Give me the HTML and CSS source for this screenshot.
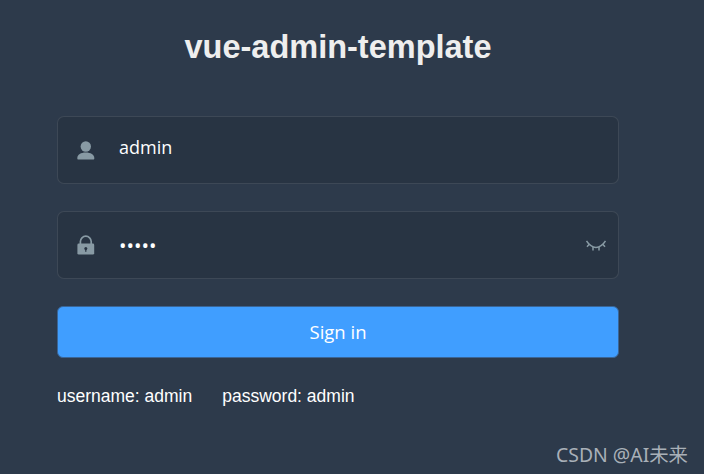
FILE: index.html
```html
<!DOCTYPE html>
<html lang="en">

<head>
    <meta charset="UTF-8">
    <meta name="viewport" content="width=device-width, initial-scale=1.0">
    <title>vue-admin-template</title>
    <link rel="stylesheet" href="styles.css">
</head>

<body>
    <div class="login-container">
        <form class="login-form">
            <h3 class="title">vue-admin-template</h3>

            <div class="form-item">
                <span class="svg-container">
                    <svg class="icon" width="20" height="20" viewBox="0 0 20 20">
                        <circle cx="9.800" cy="6.500" r="5.200" fill="#889aa4" />
                        <path d="M1.300 18.200c0-3.500 3.600-5.600 8.500-5.600s8.500 2.100 8.500 5.600c0 1-.4 1.400-1 1.400H2.300c-.6 0-1-.4-1-1.400z" fill="#889aa4" />
                    </svg>
                </span>
                <input class="form-input form-input-text" type="text" value="admin">
            </div>

            <div class="form-item">
                <span class="svg-container">
                    <svg class="icon" width="20" height="20" viewBox="0 0 20 20">
                        <path d="M4.400 9V6.600a5.400 5.400 0 0 1 10.800 0V9" fill="none" stroke="#889aa4" stroke-width="1.700" />
                        <rect x="1.400" y="8.600" width="16.800" height="11" rx="1.400" fill="#889aa4" />
                        <circle cx="9.800" cy="13.400" r="1.500" fill="#283443" />
                        <rect x="9.200" y="13.600" width="1.200" height="3.200" fill="#283443" />
                    </svg>
                </span>
                <input class="form-input form-input-pwd" type="password" value="admin">
                <span class="show-pwd">
                    <svg width="20" height="14" viewBox="0 0 20 14">
                        <path d="M.5 3c2.800 4.400 5.800 6.500 9.500 6.500s6.700-2.100 9.500-6.500" fill="none" stroke="#889aa4" stroke-width="1.500" />
                        <path d="M7 9v3.500M13 9v3.500M3.300 6.200L1 8.800M16.700 6.200L19 8.800" fill="none" stroke="#889aa4" stroke-width="1.500" />
                    </svg>
                </span>
            </div>

            <button class="btn-login" type="button">Sign in</button>

            <div class="tips">
                <span>username: admin</span>
                <span>password: admin</span>
            </div>
        </form>
    </div>

    <div class="watermark">CSDN @AI未来</div>
</body>

</html>
```

FILE: styles.css
```css
body {
    margin: 0;
    padding: 0;
    background-color: #2d3a4b;
    font-family: "Liberation Sans", Arial, sans-serif;
    overflow: hidden;
}

.login-container {
    min-height: 474px;
    width: 100%;
    box-sizing: border-box;
    padding: 0 85px 0 57px;
}

.login-form {
    width: 562px;
}

.title {
    margin: 0;
    padding-top: 26px;
    height: 90px;
    line-height: 42px;
    font-size: 32.5px;
    font-weight: bold;
    color: #eee;
    text-align: center;
    box-sizing: content-box;
}

.form-item {
    display: flex;
    align-items: center;
    height: 68px;
    margin-bottom: 27px;
    box-sizing: border-box;
    background-color: #283443;
    border: 1px solid rgba(255, 255, 255, 0.1);
    border-radius: 7px;
}

.svg-container {
    display: flex;
    justify-content: center;
    width: 56px;
    flex-shrink: 0;
}

.form-input {
    flex: 1;
    min-width: 0;
    height: 100%;
    padding: 0 5px;
    box-sizing: border-box;
    background: transparent;
    border: none;
    outline: none;
    color: #fff;
    font-family: "Open Sans", "Noto Sans", sans-serif;
    font-size: 18px;
}

.form-input-text {
    padding-bottom: 6px;
}

.form-input-pwd {
    font-size: 20px;
}

.show-pwd {
    display: flex;
    margin-right: 12px;
}

.btn-login {
    display: block;
    width: 100%;
    height: 52px;
    padding-bottom: 3px;
    background-color: #409eff;
    border: 1px solid #3a6596;
    border-radius: 6px;
    color: #fff;
    font-family: "Open Sans", "Noto Sans", sans-serif;
    font-size: 18.5px;
}

.tips {
    display: flex;
    gap: 30px;
    margin-top: 28px;
    font-size: 17.5px;
    color: #fff;
}

.watermark {
    position: absolute;
    right: 16px;
    bottom: 6px;
    font-family: "Noto Sans", "Noto Sans CJK SC", sans-serif;
    font-size: 19.4px;
    color: #a9b0b8;
}
```
